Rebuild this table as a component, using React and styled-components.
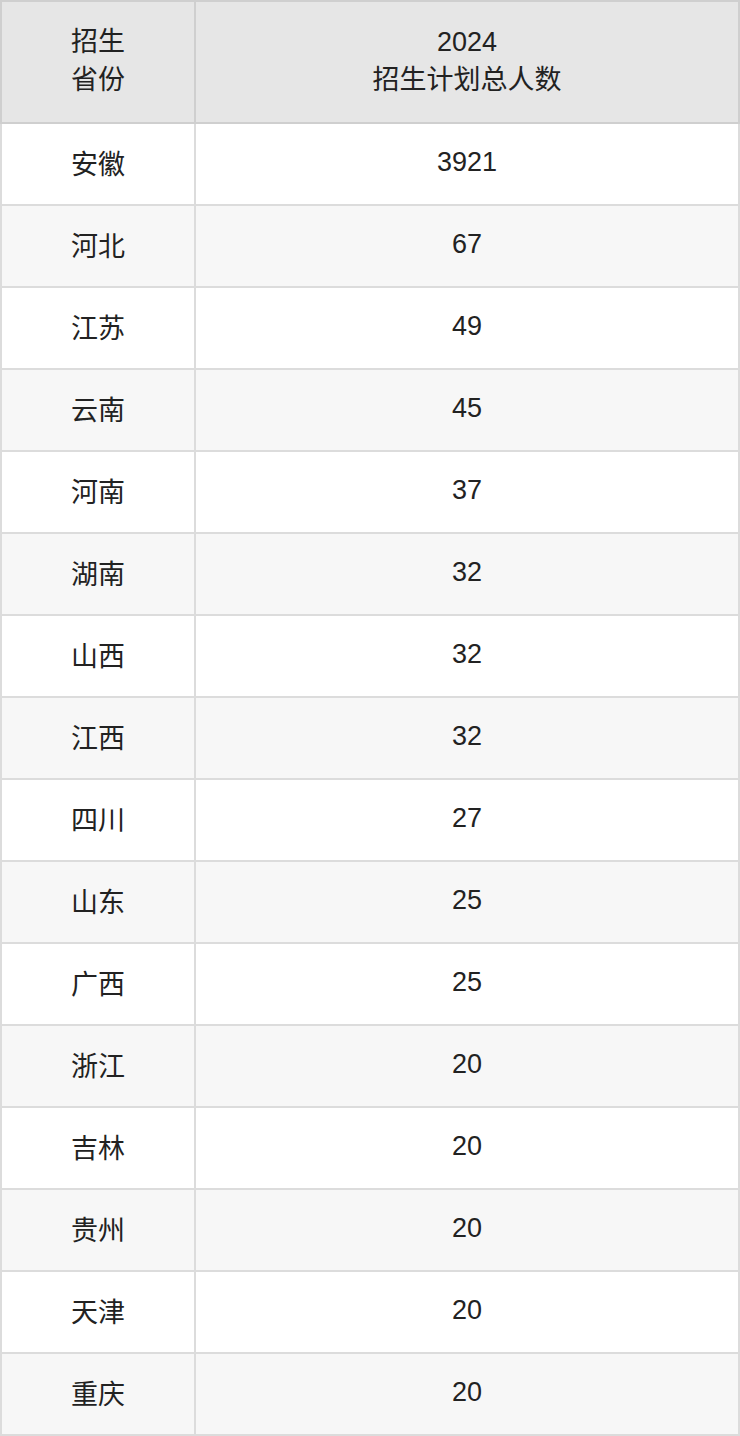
import React from 'react';
import styled, { createGlobalStyle } from 'styled-components';

const GlobalStyle = createGlobalStyle`
  html, body {
    margin: 0;
    padding: 0;
    background: #fff;
  }
  body {
    font-family: "Liberation Sans", "Noto Sans CJK SC", sans-serif;
    color: #222;
  }
`;

const Table = styled.table`
  width: 740px;
  border-collapse: collapse;
  table-layout: fixed;
  font-size: 27px;
`;

const HeadCell = styled.th`
  height: 117px;
  padding: 0 0 3px;
  background: #e6e6e6;
  border: 2px solid #cfcfcf;
  font-weight: normal;
  line-height: 38px;
  text-align: center;
  vertical-align: middle;
  width: ${(p) => p.$width || 'auto'};
`;

const Row = styled.tr`
  background: ${(p) => (p.$striped ? '#f7f7f7' : '#fff')};
`;

const Cell = styled.td`
  height: 76px;
  padding: 0 0 4px;
  border: 2px solid #dcdcdc;
  text-align: center;
  vertical-align: middle;
`;

const rows = [
  ['安徽', 3921],
  ['河北', 67],
  ['江苏', 49],
  ['云南', 45],
  ['河南', 37],
  ['湖南', 32],
  ['山西', 32],
  ['江西', 32],
  ['四川', 27],
  ['山东', 25],
  ['广西', 25],
  ['浙江', 20],
  ['吉林', 20],
  ['贵州', 20],
  ['天津', 20],
  ['重庆', 20],
];

export default function App() {
  return (
    <>
      <GlobalStyle />
      <Table>
        <thead>
          <tr>
            <HeadCell $width="192px">
              招生
              <br />
              省份
            </HeadCell>
            <HeadCell>
              2024
              <br />
              招生计划总人数
            </HeadCell>
          </tr>
        </thead>
        <tbody>
          {rows.map(([province, count], i) => (
            <Row key={province} $striped={i % 2 === 1}>
              <Cell>{province}</Cell>
              <Cell>{count}</Cell>
            </Row>
          ))}
        </tbody>
      </Table>
    </>
  );
}
